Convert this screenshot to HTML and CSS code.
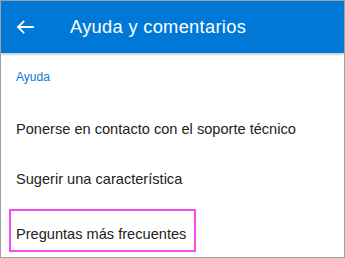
FILE: index.html
```html
<!DOCTYPE html>
<html lang="es">
<head>
<meta charset="utf-8">
<link rel="stylesheet" href="styles.css">
</head>
<body>
<div class="frame">
  <header class="appbar">
    <svg class="back" width="18" height="14" viewBox="0 0 18 14" aria-hidden="true">
      <path d="M17 7H2M7.5 1.5L2 7l5.5 5.5" fill="none" stroke="#fff" stroke-width="1.8" stroke-linecap="square"/>
    </svg>
    <h1 class="title">Ayuda y comentarios</h1>
  </header>
  <main class="content">
    <div class="section">Ayuda</div>
    <div class="item">Ponerse en contacto con el soporte técnico</div>
    <div class="item">Sugerir una característica</div>
    <div class="item highlight">Preguntas más frecuentes</div>
  </main>
</div>
</body>
</html>
```
FILE: styles.css
```css
* { box-sizing: border-box; }
html, body { margin: 0; padding: 0; background: #fff; }
body { font-family: "Liberation Sans", Arial, sans-serif; }
.frame {
  width: 345px;
  height: 258px;
  border: 1px solid #a0a0a0;
  overflow: hidden;
  display: flex;
  flex-direction: column;
}
.appbar {
  height: 52px;
  background: #0078d7;
  display: flex;
  align-items: center;
  padding-left: 15px;
  box-shadow: 0 1px 3px rgba(0,0,0,0.3);
  flex: none;
}
.back { display: block; margin-right: 36px; }
.title {
  margin: 0;
  color: #fff;
  font-size: 18.3px;
  font-weight: normal;
  letter-spacing: 0.3px;
}
.content { display: flex; flex-direction: column; padding: 0 0 0 7px; }
.section {
  color: #0a78d8;
  font-size: 12px;
  padding: 17px 0 0 8px;
  height: 51px;
}
.item {
  color: #222;
  font-size: 14.6px;
  height: 50px;
  padding-left: 8px;
  display: flex;
  align-items: center;
}
.highlight {
  width: 187px;
  height: 43px;
  border: 2px solid #f54ce9;
  margin-left: 1px;
  padding-left: 5px;
  padding-top: 6px;
  margin-top: 5px;
}
```
